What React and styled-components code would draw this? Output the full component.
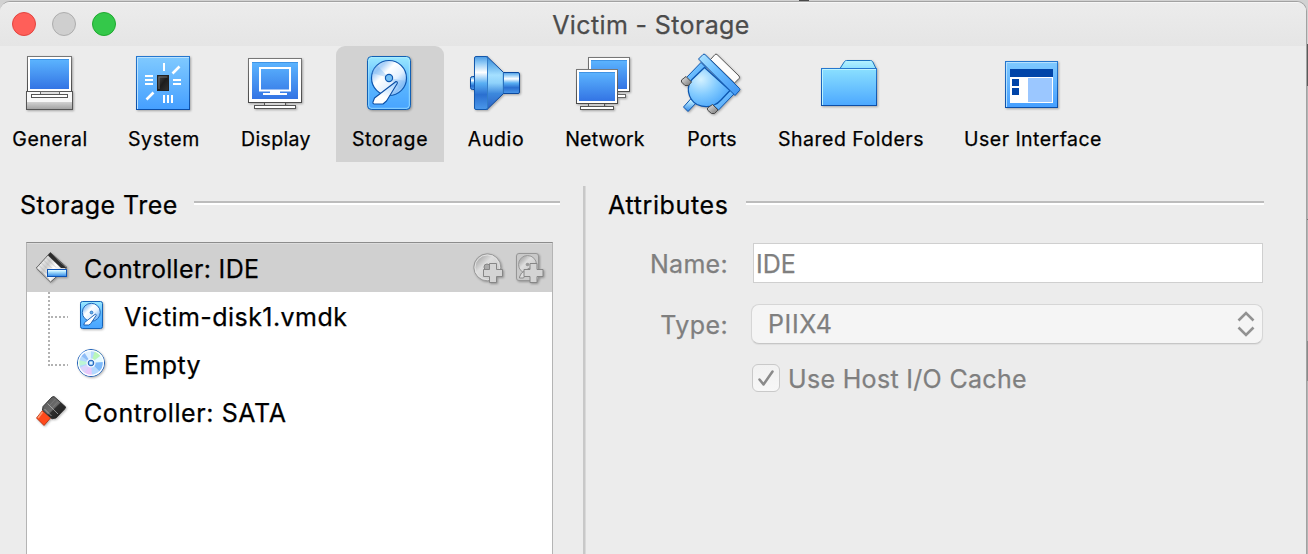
import React from 'react';
import styled, { createGlobalStyle } from 'styled-components';

const Global = createGlobalStyle`
  * { box-sizing: border-box; }
  body { margin: 0; overflow: hidden; font-family: Inter, Roboto, sans-serif; color: #000; -webkit-text-stroke: 0.25px currentColor; }
  svg { display: block; flex: none; overflow: visible; }
`;

/* ---------- window ---------- */
const Desktop = styled.div`
  width: 1308px;
  height: 554px;
  display: flex;
  padding-top: 1px;
  overflow: hidden;
  background:
    linear-gradient(#4a4a4a, #4a4a4a) 799px 0 / 10px 1px no-repeat,
    linear-gradient(#d2d2d2 0 44px, #5a5a5a 44px 86px, #b4b4b4 86px 219px, #777 219px 220px, #b4b4b4 220px 341px, #8a8a8a 341px 381px, #b4b4b4 381px);
`;
const Window = styled.div`
  width: 1307px;
  height: 570px;
  border: 1px solid #a2a2a2;
  border-left: 0;
  border-radius: 10px 10px 0 0;
  background: #ececec;
  overflow: hidden;
`;
const TitleBar = styled.header`
  display: grid;
  grid-template-columns: 1fr auto 1fr;
  align-items: center;
  height: 44px;
  padding: 0 16px 0 12px;
  border-top: 1px solid #f6f6f6;
  background: linear-gradient(#ececec, #e5e5e5);
`;
const Lights = styled.div`
  display: flex;
  gap: 16px;
  padding-bottom: 1px;
`;
const Light = styled.span`
  width: 24px;
  height: 24px;
  border-radius: 50%;
  border: 1px solid ${(p) => p.$edge};
  background: ${(p) => p.$fill};
`;
const Title = styled.h1`
  margin: 0;
  padding-top: 1px;
  font-size: 25px;
  font-weight: 400;
  line-height: 30px;
  letter-spacing: 0.37px;
  color: #4c4c4c;
`;

/* ---------- toolbar ---------- */
const Toolbar = styled.nav`
  display: flex;
  height: 116px;
`;
const Tool = styled.div`
  display: flex;
  flex-direction: column;
  align-items: center;
  width: ${(p) => p.$width}px;
  margin-right: ${(p) => p.$gap || 0}px;
  padding-top: 4px;
  border-radius: 9px 9px 0 0;
  background: ${(p) => (p.$active ? '#d2d2d2' : 'transparent')};
`;
const ToolLabel = styled.span`
  margin-top: 13px;
  font-size: 19.5px;
  line-height: 24px;
  white-space: nowrap;
  letter-spacing: ${(p) => p.$spacing}px;
`;

/* ---------- body ---------- */
const Body = styled.main`
  display: flex;
  padding-top: 24px;
`;
const TreePane = styled.section`
  width: 560px;
  padding-left: 20px;
`;
const Splitter = styled.div`
  width: 3px;
  height: 400px;
  margin: 0 22px 0 23px;
  background: #c8c8c8;
  border-right: 1px solid #d9d9d9;
`;
const AttrPane = styled.section`
  width: 656px;
`;
const SectionHead = styled.div`
  display: flex;
  align-items: center;
  gap: ${(p) => p.$gap}px;
  height: 38px;
`;
const SectionTitle = styled.h2`
  margin: 0;
  font-size: 25px;
  font-weight: 400;
  line-height: 30px;
  white-space: nowrap;
  letter-spacing: ${(p) => p.$spacing}px;
`;
const Rule = styled.div`
  flex: 1;
  height: 4px;
  margin-bottom: 4px;
  border-top: 2px solid #bcbcbc;
  border-bottom: 2px solid #fff;
`;
const Tree = styled.div`
  width: 527px;
  height: 340px;
  margin: 18px 0 0 6px;
  border: 1px solid #b4b4b4;
  border-top-color: #8c8c8c;
  background: #fff;
`;
const TreeRow = styled.div`
  display: flex;
  align-items: center;
  height: ${(p) => (p.$selected ? 49 : 48)}px;
  padding-left: ${(p) => (p.$child ? 21 : 5)}px;
  background: ${(p) => (p.$selected ? '#d0d0d0' : 'transparent')};
  border-top: ${(p) => (p.$selected ? '1px solid #dcdcdc' : '0')};
`;
const RowText = styled.span`
  flex: 1;
  margin-left: ${(p) => p.$gap}px;
  padding-top: 2px;
  font-size: 25px;
  line-height: 30px;
  white-space: nowrap;
  letter-spacing: ${(p) => p.$spacing}px;
`;
const RowActions = styled.div`
  display: flex;
  gap: 10px;
  padding-right: 6px;
`;

const Form = styled.div`
  display: grid;
  grid-template-columns: 120px 512px;
  column-gap: 23px;
  grid-template-rows: 40px 40px 30px;
  row-gap: 20px;
  margin-top: 19px;
  align-items: center;
  font-size: 25px;
  line-height: 30px;
  color: #7f7f7f;
`;
const FormLabel = styled.label`
  justify-self: end;
  padding-top: ${(p) => p.$drop || 0}px;
  letter-spacing: ${(p) => p.$spacing}px;
`;
const TextField = styled.div`
  height: 40px;
  margin: 0 0 0 2px;
  padding: 5px 0 0 2px;
  border: 1px solid #cfcfcf;
  background: #fff;
`;
const Select = styled.div`
  display: flex;
  align-items: center;
  justify-content: space-between;
  height: 40px;
  margin-top: 2px;
  padding: 0 7px 0 16px;
  border: 1px solid #d6d6d6;
  border-bottom-color: #c6c6c6;
  border-radius: 8px;
  box-shadow: 0 1px 1px rgba(0, 0, 0, 0.06);
  background: #f5f5f5;
  letter-spacing: 0.6px;
`;
const CheckRow = styled.div`
  grid-column: 2;
  display: flex;
  align-items: center;
  gap: 8px;
  padding-top: 1px;
  margin-left: 1px;
  letter-spacing: 0.32px;
  white-space: nowrap;
`;
const CheckBox = styled.span`
  display: flex;
  align-items: center;
  justify-content: center;
  width: 28px;
  height: 28px;
  margin-bottom: 1px;
  border: 1px solid #c9c9c9;
  border-radius: 6px;
  background: linear-gradient(#f1f1f1, #f7f7f7);
`;

/* ---------- icons ---------- */
const IconSvg = styled.svg`
  filter: drop-shadow(1px 1px 1px rgba(0, 0, 0, 0.3));
`;
const Icon = ({ x, y = 50, w = 64, h = 64, children }) => (
  <IconSvg width={w} height={h} viewBox={`${x} ${y} ${w} ${h}`} fill="none">{children}</IconSvg>
);

const Gradients = () => (
  <svg width="0" height="0">
    <defs>
      <linearGradient id="screen" x2="0" y2="1"><stop stopColor="#5cb5ff" /><stop offset="1" stopColor="#3374e4" /></linearGradient>
      <linearGradient id="tile" x2="0" y2="1"><stop stopColor="#80caff" /><stop offset="1" stopColor="#459fff" /></linearGradient>
      <linearGradient id="edge" x2="0" y2="1"><stop stopColor="#2577cf" /><stop offset="1" stopColor="#0c4fa8" /></linearGradient>
      <linearGradient id="frame" x2="0" y2="1"><stop stopColor="#777" /><stop offset="1" stopColor="#4a4a4a" /></linearGradient>
      <linearGradient id="drive" x2="0" y2="1"><stop stopColor="#9be9ff" /><stop offset=".5" stopColor="#5cb8ff" /><stop offset="1" stopColor="#48a4ff" /></linearGradient>
      <linearGradient id="platter" x2="1" y2="1"><stop stopColor="#cfe4fb" /><stop offset=".22" stopColor="#a9d0f8" /><stop offset=".38" stopColor="#fff" /><stop offset=".6" stopColor="#e4f1ff" /><stop offset=".8" stopColor="#8cc2f8" /><stop offset="1" stopColor="#fff" /></linearGradient>
      <linearGradient id="arm" x1=".8" x2=".4" y2="1"><stop stopColor="#9fd0ff" /><stop offset=".7" stopColor="#fff" /></linearGradient>
      <linearGradient id="metal" x2="0" y2="1"><stop stopColor="#4b9be4" /><stop offset=".12" stopColor="#8cc8f6" /><stop offset=".3" stopColor="#fff" /><stop offset=".5" stopColor="#5ab0f4" /><stop offset=".72" stopColor="#2a6fd0" /><stop offset="1" stopColor="#4b98ea" /></linearGradient>
      <linearGradient id="cone" x2="0" y2="1"><stop stopColor="#2e86d8" /><stop offset=".35" stopColor="#a5e0ff" /><stop offset=".5" stopColor="#8fd2fb" /><stop offset=".7" stopColor="#3c88dd" /><stop offset="1" stopColor="#2c62c4" /></linearGradient>
      <linearGradient id="folder" x2="0" y2="1"><stop stopColor="#8be0ff" /><stop offset="1" stopColor="#4ca8ff" /></linearGradient>
      <linearGradient id="tab" x2="0" y2="1"><stop stopColor="#b5f3ff" /><stop offset="1" stopColor="#8fe0ff" /></linearGradient>
      <radialGradient id="hood" cx=".3" cy=".3" r=".8"><stop stopColor="#d5f2ff" /><stop offset=".5" stopColor="#84ccff" /><stop offset="1" stopColor="#47a4fa" /></radialGradient>
      <linearGradient id="bar" x2="1" y2="1"><stop stopColor="#b4e6ff" /><stop offset=".4" stopColor="#6fc0ff" /><stop offset="1" stopColor="#3f94f2" /></linearGradient>
      <linearGradient id="grey" x2="1" y2="1"><stop stopColor="#e8e8e8" /><stop offset="1" stopColor="#747474" /></linearGradient>
      <linearGradient id="chip" x2="1" y2="1"><stop stopColor="#4c4c4c" /><stop offset=".5" stopColor="#1c1c1c" /><stop offset="1" stopColor="#333" /></linearGradient>
      <linearGradient id="base" x2="0" y2="1"><stop stopColor="#d2d2d2" /><stop offset="1" stopColor="#a4a4a4" /></linearGradient>
      <linearGradient id="ribbon" x2="1" y2=".6"><stop stopColor="#fff" /><stop offset=".25" stopColor="#eee" /><stop offset=".45" stopColor="#ccc" /><stop offset=".65" stopColor="#fff" /><stop offset="1" stopColor="#ccc" /></linearGradient>
      <linearGradient id="plug" x2="0" y2="1"><stop stopColor="#fff" /><stop offset=".3" stopColor="#b4e8ff" /><stop offset="1" stopColor="#2e86e6" /></linearGradient>
      <linearGradient id="sata" x2="1" y2="1"><stop stopColor="#555" /><stop offset=".5" stopColor="#6c6c6c" /><stop offset=".55" stopColor="#2e2e2e" /><stop offset="1" stopColor="#1b1b1b" /></linearGradient>
      <linearGradient id="dim" x2="1" y2="1"><stop stopColor="#cfcfcf" /><stop offset=".2" stopColor="#b4b4b4" /><stop offset=".4" stopColor="#dedede" /><stop offset="1" stopColor="#c0c0c0" /></linearGradient>
    </defs>
  </svg>
);

const GeneralIcon = () => (
  <Icon x={18}>
    <rect x="27.5" y="56.5" width="44" height="35" fill="#fff" stroke="url(#frame)" />
    <rect x="30" y="59" width="39" height="30" fill="url(#screen)" />
    <path d="M30 59.5h39" stroke="#3f93e4" />
    <rect x="26.5" y="91.5" width="46" height="18" fill="#f8f8f8" stroke="#555" />
    <rect x="27" y="102" width="45" height="7" fill="url(#base)" />
    <rect x="40.5" y="91.5" width="19" height="3" fill="#ddd" stroke="#666" />
    <rect x="31.5" y="94.5" width="36" height="3" fill="#fff" stroke="#555" />
  </Icon>
);
const SystemIcon = () => (
  <Icon x={132}>
    <rect x="136.5" y="56.5" width="53" height="53" fill="url(#tile)" stroke="url(#edge)" />
    <path d="M137.5 109V57.5H189" stroke="#b9e2ff" />
    <g stroke="#fff" strokeWidth="2">
      <path d="M164 63v8M145 76h8M145 80h8M145 84h8M173 80h8M173 84h8M164 95v8M168 95v8M172 95v8" />
      <path d="M172.5 73.5l7-7M146.5 99.5l7-7" strokeWidth="2.6" />
    </g>
    <rect x="157.5" y="75.5" width="11" height="15" fill="url(#chip)" stroke="#222" />
    <path d="M159 89V77h8.500" stroke="#696969" />
  </Icon>
);
const DisplayIcon = () => (
  <Icon x={244}>
    <rect x="264.5" y="102.5" width="21" height="4" fill="#d5d5d5" stroke="#555" />
    <rect x="254.5" y="105.5" width="41" height="3" fill="#fff" stroke="#555" />
    <rect x="248.5" y="58.5" width="53" height="44" fill="#fff" stroke="url(#frame)" />
    <rect x="252" y="62" width="46" height="37" fill="url(#screen)" />
    <path d="M252 62.5h46" stroke="#3f93e4" />
    <rect x="260" y="68" width="30" height="22.5" stroke="#fff" strokeWidth="2" />
    <path d="M270 91h10v2h7v2h-24v-2h7z" fill="#fff" />
  </Icon>
);
const StorageIcon = () => (
  <Icon x={358}>
    <rect x="367.5" y="56.5" width="43" height="53" rx="4" fill="url(#drive)" stroke="#1260b4" />
    <rect x="368.7" y="57.7" width="40.6" height="50.6" rx="3" stroke="#b5efff" opacity=".65" />
    <circle cx="389" cy="78" r="17.5" fill="url(#platter)" stroke="#0f58b0" strokeWidth="1.2" />
    <path d="M389 78L377 65a17 17 0 0 0-5 8zM389 78l17 3a17 17 0 0 1-5 9z" fill="#76b4f2" opacity=".35" />
    <circle cx="389" cy="78" r="3.6" fill="#75c0f5" stroke="#0f58b0" strokeWidth="1.2" />
    <path d="M396 81.5q1.800 0 1.200 2L386.5 101l-3.500 3h-9q-1.500-.5-1-2l1.500-4z" fill="url(#arm)" stroke="#0c4ea4" strokeWidth="1.1" strokeLinejoin="round" />
  </Icon>
);
const AudioIcon = () => (
  <Icon x={464}>
    <g stroke="#0c489c">
      <rect x="470.5" y="76.5" width="6" height="13" rx="2" fill="url(#metal)" />
      <rect x="502" y="72.5" width="17.5" height="21" rx="1.5" fill="url(#metal)" />
      <path d="M487 56.5L503.5 72.5v21L487 109.5z" fill="url(#cone)" />
      <rect x="474.5" y="56.5" width="13" height="53" rx="1.5" fill="url(#metal)" stroke="#1458ac" />
    </g>
    <path d="M487.5 57.5v51M503.3 73v20" stroke="#337dc8" />
  </Icon>
);
const NetworkIcon = () => (
  <Icon x={573}>
    <rect x="600.5" y="94.5" width="25" height="3" fill="#fff" stroke="#666" />
    <rect x="588.5" y="57.5" width="41" height="34" fill="#fff" stroke="url(#frame)" />
    <rect x="591" y="60" width="36" height="29" fill="url(#screen)" />
    <rect x="588.5" y="103" width="16" height="4" fill="#ccc" stroke="#555" />
    <rect x="580.5" y="106.5" width="33" height="3" fill="#fff" stroke="#555" />
    <rect x="576.5" y="69.5" width="41" height="34" fill="#fff" stroke="url(#frame)" />
    <rect x="579" y="72" width="36" height="29" fill="url(#screen)" />
    <path d="M579 72.5h36M591 60.5h36" stroke="#3f93e4" />
  </Icon>
);
const PortsIcon = () => (
  <Icon x={680}>
    <path d="M710.5 59.5L715 54.5q1-.8 2 0L739 76q1 1.200.2 2.300L734.5 83z" fill="#fdfdfd" stroke="#555" />
    <g stroke="#0c55ae" strokeLinejoin="round">
      <path d="M692 97.5l5 4.500-9 9.500-4.500-4.500z" fill="url(#plug)" />
      <path d="M701 62.5l5 5-14.500 15.500-5.500-5z" fill="url(#bar)" />
      <path d="M730 89.5l4 4.500-15.500 16-5.500-5z" fill="url(#bar)" />
      <path d="M704.5 67.5L692 79.5q-4.500 5-3.500 12.500 1.500 8.500 8.500 12.500 9 4 17 .5 4-1.500 7-5l9-9.500z" fill="url(#hood)" strokeWidth="1.3" />
      <path d="M698.5 59l4.500-4.500q1-.8 2 0L739.5 88.500q.8 1 0 2L735 95.500z" fill="url(#bar)" />
    </g>
    <g fill="url(#grey)" stroke="#484848">
      <path d="M686 76.5l5.500 5.500-3 3.500h-3.500l-3.500-3.500v-2z" />
      <path d="M712.5 104.5l5.500 5.500-3.500 3.500h-3l-4-3.500v-2z" />
    </g>
  </Icon>
);
const FolderIcon = () => (
  <Icon x={819}>
    <path d="M840 68.5l4.500-7q.8-1 2-1h24q1.500 0 2.200 1.200l3.300 6.800z" fill="url(#tab)" stroke="#1a72c0" />
    <rect x="821.5" y="68.5" width="55" height="37" fill="url(#folder)" stroke="url(#edge)" />
    <path d="M822.5 105V69.5H876" stroke="#bdf3ff" />
  </Icon>
);
const InterfaceIcon = () => (
  <Icon x={1001}>
    <rect x="1005.5" y="61.5" width="52" height="46" fill="url(#tile)" stroke="url(#edge)" />
    <path d="M1006.5 107V62.5H1057" stroke="#b5e0ff" />
    <path d="M1010 77h43v26h-43z" fill="#fff" />
    <path d="M1010 69h43v8h-43zM1012 79h7v7h-7zM1012 88h7v7h-7z" fill="#0144a8" />
    <path d="M1028 78h24v24h-24z" fill="#9bc7ff" />
  </Icon>
);
const IdeIcon = () => (
  <Icon x={32} y={248} w={40} h={40}>
    <path d="M50.3 252.5L67 267.5 50.5 282 36.3 268z" fill="url(#ribbon)" stroke="#444" strokeWidth=".8" />
    <path d="M50.3 252.5L66.5 268h-5.500l-13-12.500z" fill="#2c2c2c" />
    <path d="M46 257.5l10 10M43.5 260l8 8M41 262.5l6 6M39 265.5l8 8M41 271l8 8" stroke="#aaa" strokeWidth=".5" />
    <rect x="47.5" y="269.5" width="19" height="7" fill="url(#plug)" stroke="#0d52b4" />
  </Icon>
);
const SataIcon = () => (
  <Icon x={32} y={392} w={40} h={40}>
    <path d="M42.5 410.5l8 7.500-6.500 7.500L36.5 418z" fill="#ff4a1c" stroke="#b02c0a" strokeWidth=".8" />
    <path d="M42.5 412l-4.500 6" stroke="#ff9a70" strokeWidth="1.5" />
    <path d="M54 396.5l11.700 10.500-1 2-8.700 9-4 .8-9.500-8.800.5-3.500 9-9.500z" fill="url(#sata)" stroke="#222" strokeWidth=".8" />
    <path d="M47.5 403.500l10.500 10.500M44.500 409l7 7" stroke="#c5c5c5" strokeWidth=".8" opacity=".8" />
    <path d="M50 405l5.500-6M52.500 407.500l5.500-6" stroke="#999" strokeWidth=".6" opacity=".6" />
  </Icon>
);
const SmallDriveIcon = () => (
  <Icon x={76} y={301} w={30} h={30}>
    <rect x="80.5" y="301.5" width="22" height="27" rx="2" fill="url(#drive)" stroke="#1563b8" />
    <circle cx="91.3" cy="312.3" r="9" fill="url(#platter)" stroke="#1f68bc" />
    <circle cx="91.5" cy="312.5" r="1.4" fill="#6bb4ee" stroke="#1f68bc" strokeWidth=".8" />
    <path d="M95.5 314l.8 1.200-5.500 8.300-2 1.500h-5l.8-2.500z" fill="#fff" stroke="#1358b0" strokeWidth=".9" />
  </Icon>
);
const DiscIcon = () => (
  <Icon x={76} y={349} w={30} h={30}>
    <circle cx="91" cy="363" r="13.5" fill="#b5dafd" stroke="#1a5cb4" />
    <path d="M91 363L80 355a13 13 0 0 1 4-4z" fill="#8dbcf7" />
    <path d="M91 363L84 352a13 13 0 0 1 7-2z" fill="#dff0ff" />
    <path d="M91 363L95 350.5a13 13 0 0 1 6.500 4.500z" fill="#b9f7b8" />
    <path d="M91 363l10.500-8a13 13 0 0 1 2.500 7z" fill="#e4faff" />
    <path d="M91 363l13-1a13 13 0 0 1-4 10z" fill="#7fbafa" />
    <path d="M91 363l9 9a13 13 0 0 1-8 4z" fill="#b5d9ff" />
    <path d="M91 363l1 13a13 13 0 0 1-8-2z" fill="#e9c8fa" />
    <path d="M91 363l-7 11a13 13 0 0 1-5-6z" fill="#dcd4fb" />
    <path d="M91 363l-12.800 3a13 13 0 0 1 .3-6z" fill="#bdf5d4" />
    <circle cx="91" cy="363" r="12.4" stroke="#fff" strokeWidth="1.2" />
    <circle cx="91" cy="363" r="4.6" fill="#eff7ff" />
    <circle cx="91" cy="363" r="2.8" fill="#9ccdf8" stroke="#1a5cb4" />
    <circle cx="91" cy="363" r="1" fill="#fff" />
  </Icon>
);
const Plus = ({ x, y }) => (
  <path transform={`translate(${x} ${y})`} d="M-3.500-9.500h7v6h6v7h-6v6h-7v-6h-6v-7h6z" fill="#d4d4d4" stroke="#868686" />
);
const AddDiscIcon = () => (
  <Icon x={472} y={252} w={32} h={32}>
    <circle cx="487.3" cy="267.3" r="13.5" fill="url(#dim)" stroke="#999" />
    <circle cx="487.3" cy="267.3" r="12.3" stroke="#e2e2e2" />
    <circle cx="487" cy="267" r="3" fill="#aaa" stroke="#858585" />
    <Plus x={493} y={273} />
  </Icon>
);
const AddDriveIcon = () => (
  <Icon x={514} y={252} w={32} h={32}>
    <rect x="516.5" y="253.5" width="22" height="27" rx="2.5" fill="#c9c9c9" stroke="#969696" />
    <circle cx="527.5" cy="264.5" r="9" fill="url(#dim)" stroke="#999" />
    <circle cx="527.5" cy="264.5" r="1.8" fill="#999" />
    <path d="M519.5 277l2-4 8-5-6 10h-4z" fill="#ddd" stroke="#8c8c8c" />
    <Plus x={533.5} y={273} />
  </Icon>
);
const Branch = ({ last }) => (
  <svg width="28" height="48" viewBox="0 0 28 48" fill="none" stroke="#b2b2b2" strokeWidth="2" strokeDasharray="2 2">
    <path d={last ? 'M1 0V26' : 'M1 0V48'} />
    <path d="M3 25H20" />
  </svg>
);

const TOOLS = [
  { label: 'General', art: GeneralIcon, width: 100, spacing: 0.5 },
  { label: 'System', art: SystemIcon, width: 128, spacing: 0.6 },
  { label: 'Display', art: DisplayIcon, width: 96, gap: 12, spacing: 0.35 },
  { label: 'Storage', art: StorageIcon, width: 108, spacing: 0.6, active: true },
  { label: 'Audio', art: AudioIcon, width: 104, spacing: 0.6 },
  { label: 'Network', art: NetworkIcon, width: 114, spacing: 0.15 },
  { label: 'Ports', art: PortsIcon, width: 100, spacing: 0.3 },
  { label: 'Shared Folders', art: FolderIcon, width: 178, spacing: 0.5 },
  { label: 'User Interface', art: InterfaceIcon, width: 186, spacing: 0.46 },
];

export default function App() {
  return (
    <>
      <Global />
      <Desktop>
        <Window>
          <TitleBar>
            <Lights>
              <Light $fill="#ff5f59" $edge="#e2443f" />
              <Light $fill="#cfcfcf" $edge="#adadad" />
              <Light $fill="#34c84a" $edge="#1fa92f" />
            </Lights>
            <Title>Victim - Storage</Title>
            <span />
          </TitleBar>
          <Toolbar>
            {TOOLS.map(({ label, art: Art, width, gap, spacing, active }) => (
              <Tool key={label} $width={width} $gap={gap} $active={active}>
                <Art />
                <ToolLabel $spacing={spacing}>{label}</ToolLabel>
              </Tool>
            ))}
          </Toolbar>
          <Body>
            <TreePane>
              <SectionHead $gap={16}>
                <SectionTitle $spacing={0.47}>Storage Tree</SectionTitle>
                <Rule />
              </SectionHead>
              <Tree>
                <TreeRow $selected>
                  <IdeIcon />
                  <RowText $gap={12} $spacing={0.34}>Controller: IDE</RowText>
                  <RowActions>
                    <AddDiscIcon />
                    <AddDriveIcon />
                  </RowActions>
                </TreeRow>
                <TreeRow $child>
                  <Branch />
                  <SmallDriveIcon />
                  <RowText $gap={18} $spacing={0.44}>Victim-disk1.vmdk</RowText>
                </TreeRow>
                <TreeRow $child>
                  <Branch last />
                  <DiscIcon />
                  <RowText $gap={18} $spacing={0.4}>Empty</RowText>
                </TreeRow>
                <TreeRow>
                  <SataIcon />
                  <RowText $gap={12} $spacing={0.6}>Controller: SATA</RowText>
                </TreeRow>
              </Tree>
            </TreePane>
            <Splitter />
            <AttrPane>
              <SectionHead $gap={17}>
                <SectionTitle $spacing={0.65}>Attributes</SectionTitle>
                <Rule />
              </SectionHead>
              <Form>
                <FormLabel $spacing={0.3} $drop={2}>Name:</FormLabel>
                <TextField>IDE</TextField>
                <FormLabel $spacing={0.4} $drop={4}>Type:</FormLabel>
                <Select>
                  PIIX4
                  <svg width="18" height="26" viewBox="0 0 18 26" fill="none" stroke="#929292" strokeWidth="2.6">
                    <path d="M1.500 9.500L9 2l7.500 7.500M1.500 16.500L9 24l7.500-7.500" />
                  </svg>
                </Select>
                <CheckRow>
                  <CheckBox>
                    <svg width="18" height="18" viewBox="0 0 18 18" fill="none" stroke="#8a8a8a" strokeWidth="2.5" strokeLinecap="round" strokeLinejoin="round">
                      <path d="M2.500 10.500L6.500 15.500 15.500 2.500" />
                    </svg>
                  </CheckBox>
                  Use Host I/O Cache
                </CheckRow>
              </Form>
            </AttrPane>
          </Body>
        </Window>
      </Desktop>
      <Gradients />
    </>
  );
}
